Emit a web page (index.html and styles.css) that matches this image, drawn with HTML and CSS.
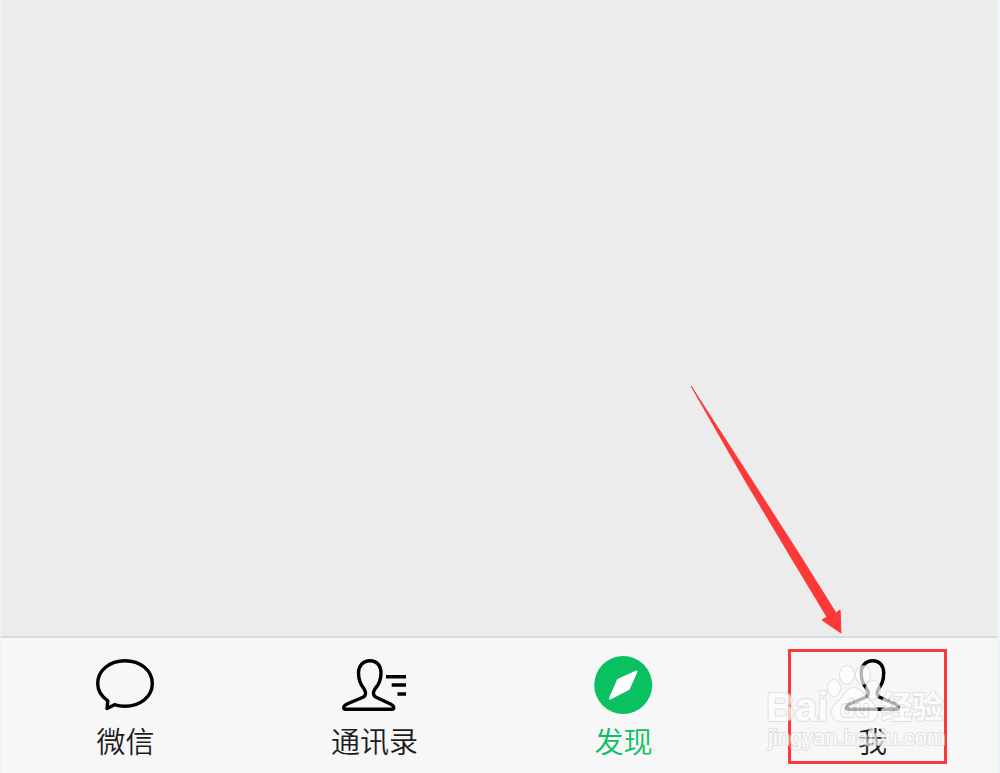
FILE: index.html
```html
<!DOCTYPE html>
<html lang="zh-CN">
<head>
<meta charset="utf-8">
<meta name="viewport" content="width=device-width, initial-scale=1">
<title>微信</title>
<link rel="stylesheet" href="styles.css">
</head>
<body>
<div class="screen">
  <main class="content"></main>
  <nav class="tabbar">
    <button class="tab" type="button">
      <svg class="tab-icon" viewBox="0 0 73 58" aria-hidden="true">
        <path d="M18.800 44.800C12.500 40.500 8.700 34.500 8.700 27.500C8.700 14.500 20.500 4.700 36 4.700S63.300 14.500 63.300 27.500S51.500 50.300 36 50.300C32 50.300 28.700 49.800 25.500 48.700L18 52.500Z"/>
      </svg>
      <span class="tab-label">微信</span>
    </button>
    <button class="tab" type="button">
      <svg class="tab-icon" viewBox="0 0 73 58" aria-hidden="true">
        <path d="M32 4.700C25 4.700 20.500 10 20.500 17C20.500 25.500 23 29 25.800 32.500C28.500 36.500 28 39.500 25 41.200L9.500 47.700C6.500 49.200 5.700 50 5.700 51.500Q5.700 53.200 7.500 53.200H54Q55.800 53.200 55.800 51.500C55.800 50 55 49.200 52 47.700L38 41.200C35 39.500 34.500 36.500 37.300 32.500C40.500 29 43 25.500 43 17C43 10 39 4.700 32 4.700Z"/>
        <path d="M48 20.700H68M53.700 29H68M59.500 38H68"/>
      </svg>
      <span class="tab-label">通讯录</span>
    </button>
    <button class="tab tab-active" type="button" aria-current="page">
      <svg class="tab-icon" viewBox="0 0 73 58" aria-hidden="true">
        <circle class="compass-disc" cx="36.200" cy="29" r="29"/>
        <path class="compass-needle" d="M49.500 15.500L41.600 33L23 42.500L31 24Z"/>
      </svg>
      <span class="tab-label">发现</span>
    </button>
    <button class="tab" type="button">
      <svg class="tab-icon" viewBox="0 0 73 58" aria-hidden="true">
        <path transform="translate(4.700 0)" d="M32 4.700C25 4.700 20.500 10 20.500 17C20.500 25.500 23 29 25.800 32.500C28.500 36.500 28 39.500 25 41.200L9.500 47.700C6.500 49.200 5.700 50 5.700 51.500Q5.700 53.200 7.500 53.200H56Q57.800 53.200 57.800 51.500C57.800 50 57 49.200 54 47.700L39 41.200C36 39.500 35.500 36.500 38 32.500C40.500 29 43 25.500 43 17C43 10 39 4.700 32 4.700Z"/>
      </svg>
      <span class="tab-label">我</span>
      <span class="highlight"></span>
    </button>
  </nav>
  <svg class="arrow" viewBox="0 0 151 248" aria-hidden="true">
    <path d="M0 0L60 93L110 171L145 227L149 224L150 247L131 234L136 231L101 173L55 96Z"/>
  </svg>
  <svg class="watermark" viewBox="0 0 184 94" aria-hidden="true">
    <text class="wm-brand" x="2" y="61">Bai</text>
    <ellipse cx="70" cy="28" rx="6" ry="8"/>
    <ellipse cx="83" cy="15" rx="7" ry="9"/>
    <ellipse cx="99" cy="15" rx="7" ry="9"/>
    <ellipse cx="109" cy="30" rx="7" ry="9"/>
    <path d="M90 28C82 28 81 36 74 42C68 47 66 52 69 57C72 62 79 62 90 61C101 62 110 62 113 56C115 51 112 46 107 42C100 37 98 28 90 28Z"/>
    <text class="wm-du" x="76" y="57">du</text>
    <text class="wm-cjk" x="117" y="58">经验</text>
    <text class="wm-url" x="4" y="85">jingyan.baidu.com</text>
  </svg>
</div>
</body>
</html>
```
FILE: styles.css
```css
* {
  box-sizing: border-box;
}

body {
  margin: 0;
  background: #eef2fb;
  font-family: "Liberation Sans", "Noto Sans CJK SC", sans-serif;
}

.screen {
  position: relative;
  display: flex;
  flex-direction: column;
  min-height: 100vh;
  padding: 0 3px 0 1px;
  overflow: hidden;
}

.content {
  flex: 1;
  background: #ececec;
}

.tabbar {
  display: grid;
  grid-template-columns: repeat(4, 1fr);
  background: #f7f7f7;
  border-top: 2px solid #dadada;
}

.tab {
  position: relative;
  display: flex;
  flex-direction: column;
  align-items: center;
  gap: 6px;
  padding: 18px 0 13px;
  border: 0;
  background: none;
  color: #1c1c1c;
  font: 350 29px/40px "Noto Sans CJK SC", sans-serif;
}

.tab-active {
  color: #0ac161;
}

.tab-icon {
  width: 73px;
  height: 58px;
  fill: none;
  stroke: #000;
  stroke-width: 3.4;
  stroke-linejoin: round;
}

.compass-disc {
  fill: #0ac161;
  stroke: none;
}

.compass-needle {
  fill: #fff;
  stroke: #fff;
  stroke-width: 2;
}

.highlight {
  position: absolute;
  inset: 11px 50px 9px 40px;
  border: 3px solid #fd3838;
}

.arrow {
  position: absolute;
  right: 158px;
  bottom: 139px;
  width: 151px;
  height: 248px;
  fill: #fd3838;
  stroke: #fd3838;
  stroke-width: 1;
  stroke-linejoin: round;
}

.watermark {
  position: absolute;
  right: 52px;
  bottom: 19px;
  width: 184px;
  height: 94px;
  fill: #fff;
  stroke: #d6d6d6;
  stroke-width: 2;
  stroke-linejoin: round;
  paint-order: stroke;
  opacity: 0.7;
}

.wm-brand {
  font: 700 40px "Liberation Sans", sans-serif;
}

.wm-du {
  font: 700 24px "Liberation Sans", sans-serif;
}

.wm-cjk {
  font: 700 31px "Noto Sans CJK SC", sans-serif;
}

.wm-url {
  font: 400 22px "Liberation Sans", sans-serif;
}
```
